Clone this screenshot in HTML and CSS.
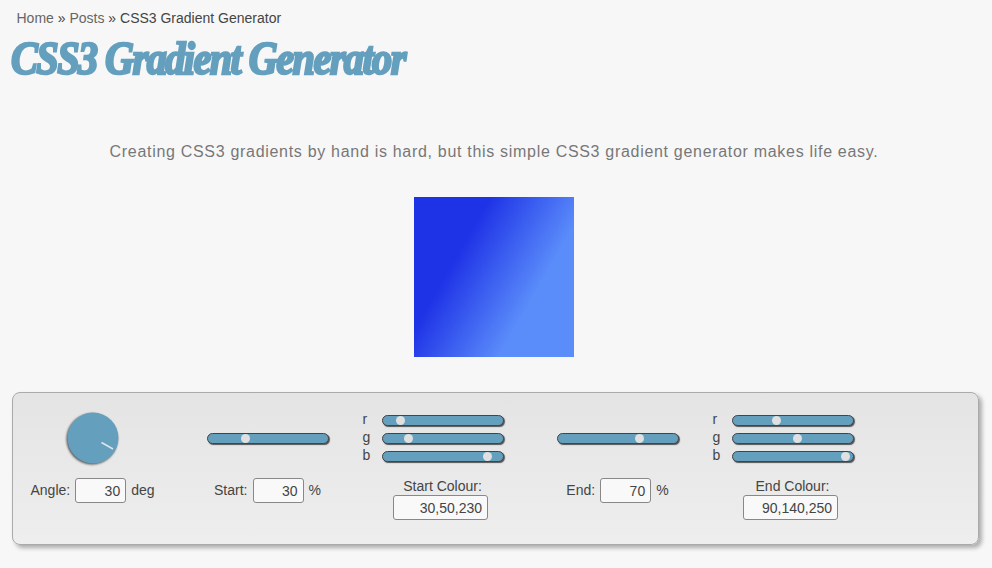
FILE: index.html
```
<!DOCTYPE html>
<html lang="en">
<head>
<meta charset="utf-8">
<title>CSS3 Gradient Generator</title>
<link rel="stylesheet" href="styles.css">
</head>
<body>
<nav class="crumbs"><a>Home</a> » <a>Posts</a> » CSS3 Gradient Generator</nav>
<h1>CSS3 Gradient Generator</h1>
<p class="intro">Creating CSS3 gradients by hand is hard, but this simple CSS3 gradient generator makes life easy.</p>
<div class="preview"></div>
<section class="panel">
  <div class="control">
    <div class="dial-area">
      <svg class="dial" viewBox="0 0 52 52"><circle cx="26" cy="26" r="25.5"/><path d="M34.5 30.5L46 37"/></svg>
    </div>
    <div class="field"><label>Angle:</label><span class="input">30</span><span>deg</span></div>
  </div>
  <div class="control">
    <div class="dial-area"><div class="slider"><i style="margin-left:33px"></i></div></div>
    <div class="field"><label>Start:</label><span class="input">30</span><span>%</span></div>
  </div>
  <div class="control">
    <div class="rgb">
      <div class="row"><span>r</span><div class="slider"><i style="margin-left:13px"></i></div></div>
      <div class="row"><span>g</span><div class="slider"><i style="margin-left:21px"></i></div></div>
      <div class="row"><span>b</span><div class="slider"><i style="margin-left:100px"></i></div></div>
    </div>
    <div class="colour"><label>Start Colour:</label><span class="input wide">30,50,230</span></div>
  </div>
  <div class="control">
    <div class="dial-area"><div class="slider"><i style="margin-left:77px"></i></div></div>
    <div class="field"><label>End:</label><span class="input">70</span><span>%</span></div>
  </div>
  <div class="control">
    <div class="rgb">
      <div class="row"><span>r</span><div class="slider"><i style="margin-left:39px"></i></div></div>
      <div class="row"><span>g</span><div class="slider"><i style="margin-left:60px"></i></div></div>
      <div class="row"><span>b</span><div class="slider"><i style="margin-left:108px"></i></div></div>
    </div>
    <div class="colour"><label>End Colour:</label><span class="input wide">90,140,250</span></div>
  </div>
</section>
</body>
</html>
```
FILE: styles.css
```
* { box-sizing: border-box; }
body {
  margin: 0;
  height: 568px;
  overflow: hidden;
  background: #f7f7f7;
  color: #444;
  font: 14px/18px "Liberation Sans", Arial, sans-serif;
}
.crumbs { padding: 9px 0 0 16.5px; height: 27px; white-space: nowrap; }
.crumbs a { color: #666; }
h1 {
  margin: 6px 0 0 11px;
  height: 50px;
  color: #649fbe;
  font: italic bold 47px/50px "Liberation Serif", serif;
  letter-spacing: -1.8px;
  -webkit-text-stroke: 2.5px #649fbe;
  white-space: nowrap;
  transform: scaleX(.856);
  transform-origin: left;
}
.intro {
  margin: 59px 0 0;
  padding-right: 4px;
  color: #777;
  font-size: 16px;
  line-height: 20px;
  letter-spacing: 0.695px;
  text-align: center;
  white-space: nowrap;
}
.preview {
  width: 160px;
  height: 160px;
  margin: 35px 0 0 414px;
  background: linear-gradient(120deg, rgb(30,50,230) 30%, rgb(90,140,250) 70%);
}
.panel {
  display: grid;
  grid-template-columns: 167px repeat(4, 175px);
  width: 967px;
  height: 153px;
  margin: 35px 0 0 12px;
  padding-top: 19px;
  border: 1px solid #aaa;
  border-radius: 8px;
  background: linear-gradient(#e4e4e4, #eee);
  box-shadow: 3px 3px 4px rgba(0,0,0,.3);
}
.control { display: flex; flex-direction: column; align-items: center; }
.control:first-child { padding-right: 8px; }
.dial-area { display: flex; height: 52px; align-items: center; }
.dial { width: 52px; height: 52px; overflow: visible; filter: drop-shadow(-1px 1px 1px rgba(0,0,0,.65)); }
.dial circle { fill: #649fbe; }
.dial path { stroke: #dfe5e8; stroke-width: 1.5; }
.slider {
  display: flex;
  align-items: center;
  width: 122px;
  height: 11px;
  border: 1px solid #444;
  border-radius: 6px;
  background: #649fbe;
  box-shadow: 1px 1px 1px #555;
}
.slider i { width: 9px; height: 9px; border-radius: 50%; background: #e0e0e0; }
.field { display: flex; align-items: center; gap: 5px; height: 25px; margin-top: 14px; }
.field > :not(.input) { margin-top: -1px; }
.input {
  width: 51px;
  height: 25px;
  padding: 1px 5px 0 0;
  border: 1px solid #888;
  border-radius: 3px;
  background: #f9f9f9;
  line-height: 23px;
  text-align: right;
}
.rgb { display: flex; flex-direction: column; width: 162px; margin-top: -1px; }
.row { display: flex; align-items: center; height: 18px; }
.row > span { width: 20px; height: 20px; padding-left: 1px; }
.colour { display: flex; flex-direction: column; align-items: center; margin-top: 12px; }
.input.wide { width: 95px; margin-right: 4px; }
```
